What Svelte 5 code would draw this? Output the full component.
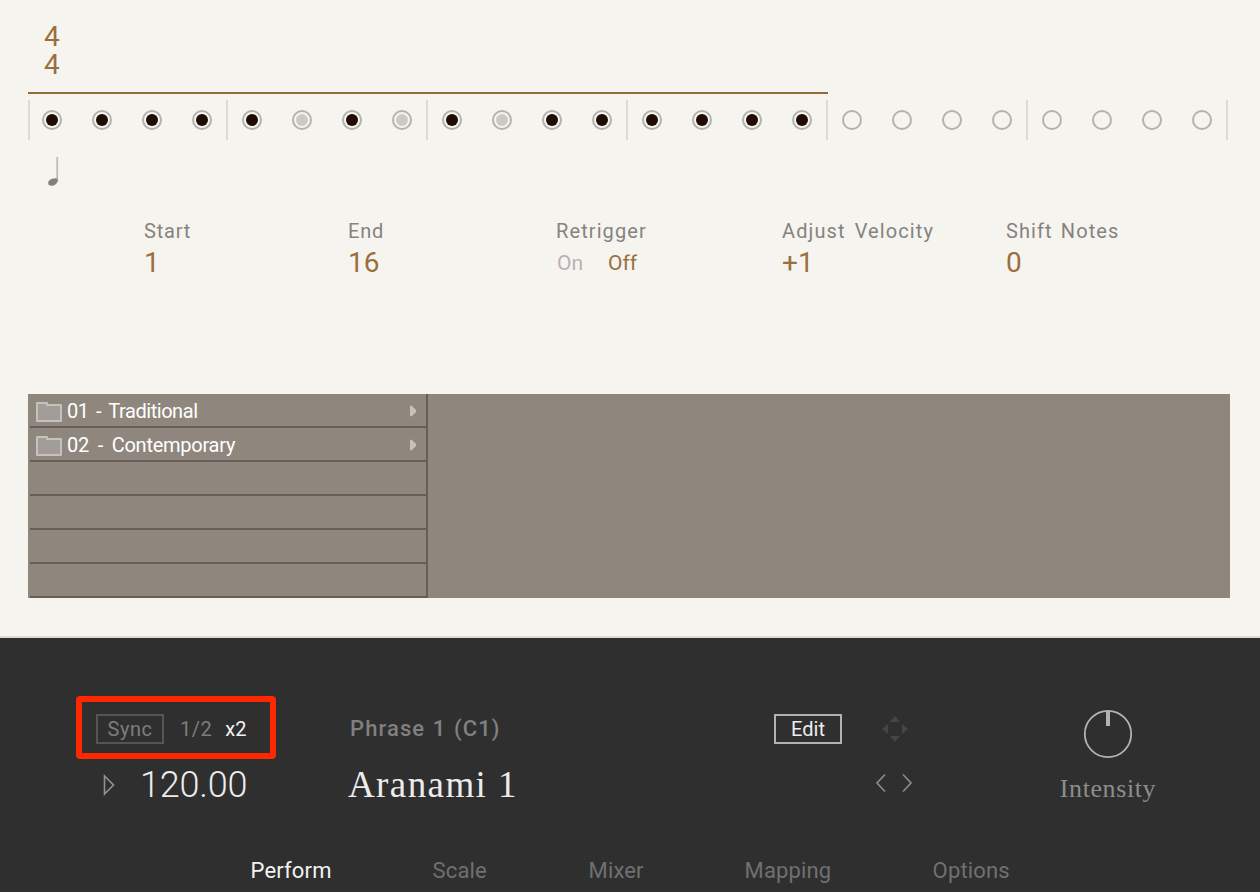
<script>
  const off = [5, 7, 9];
  const measures = Array.from({ length: 6 }, (_, m) =>
    Array.from({ length: 4 }, (_, s) => {
      const i = m * 4 + s;
      return i >= 16 ? 'empty' : off.includes(i) ? 'muted' : 'active';
    })
  );
  const params = [
    { label: 'Start', value: '1' },
    { label: 'End', value: '16' },
    { label: 'Retrigger' },
    { label: 'Adjust Velocity', value: '+1' },
    { label: 'Shift Notes', value: '0' }
  ];
  const folders = ['01 - Traditional', '02 - Contemporary', '', '', '', ''];
  const tabs = ['Perform', 'Scale', 'Mixer', 'Mapping', 'Options'];
</script>

<main>
  <section class="sequencer">
    <div class="signature"><span>4</span><span>4</span></div>
    <div class="range"></div>
    <div class="track">
      {#each measures as steps}
        <div class="measure">
          {#each steps as step}<i class="step {step}"></i>{/each}
        </div>
      {/each}
    </div>
    <svg class="note" width="12" height="32" viewBox="0 0 12 32">
      <path d="M9.2 1V26" stroke="#bdbcb8" stroke-width="1.8" fill="none" />
      <path d="M0.2 27Q0.2 24 4 22.8Q8 21.6 9.6 23V25.5Q9 28 5.5 29.4Q0.2 30.6 0.2 27Z" fill="#83817e" />
    </svg>
    <div class="params">
      {#each params as p}
        <div class="param">
          <span class="label">{p.label}</span>
          {#if p.value}
            <span class="value">{p.value}</span>
          {:else}
            <div class="toggle"><span>On</span><span class="on">Off</span></div>
          {/if}
        </div>
      {/each}
    </div>
    <div class="browser">
      <div class="list">
        {#each folders as f, i}
          <div class="row">
            {#if f}
              <svg width="26" height="20" viewBox="0 0 26 20">
                <path d="M1 19V1H11V3H25V19Z" fill="#a29d98" stroke="#c5c1bb" stroke-width="2" stroke-linejoin="round" />
              </svg>
              <span class="folder f{i}">{f}</span>
              <svg class="caret" width="6" height="12" viewBox="0 0 6 12"><path d="M0 0.5L2 1L6 5V7L2 11L0 11.5Z" fill="#c5c1bb" /></svg>
            {/if}
          </div>
        {/each}
      </div>
    </div>
  </section>

  <footer>
    <div class="controls">
      <div class="tempo">
        <div class="highlight">
          <span class="sync">Sync</span><span class="half">1/2</span><span class="double">x2</span>
        </div>
        <div class="bpm">
          <svg width="12" height="22" viewBox="0 0 12 22"><path d="M1.5 2V20L10.5 11Z" fill="none" stroke="#929292" stroke-width="1.6" /></svg>
          <span>120.00</span>
        </div>
      </div>
      <div class="phrase">
        <span class="slot">Phrase 1 (C1)</span>
        <span class="name">Aranami 1</span>
      </div>
      <div class="edit">Edit</div>
      <div class="nav">
        <svg class="pad" width="26" height="26" viewBox="0 0 26 26" fill="#454545"><path d="M13 0L18 6H8ZM13 26L18 20H8ZM0 13L6 8V18ZM26 13L20 8V18Z" /></svg>
        <svg width="38" height="20" viewBox="0 0 38 20" fill="none" stroke="#8a8a8a" stroke-width="1.7"><path d="M10 1.5L2 10L10 18.5M28 1.5L36 10L28 18.5" /></svg>
      </div>
      <div class="intensity">
        <svg width="50" height="50" viewBox="0 0 50 50"><circle cx="25" cy="25" r="23.2" fill="none" stroke="#b2b2b2" stroke-width="1.8" /><path d="M25 2V17" stroke="#b2b2b2" stroke-width="4" /></svg>
        <span>Intensity</span>
      </div>
    </div>
    <nav>
      {#each tabs as t, i}<span class="t{i}" class:current={i === 0}>{t}</span>{/each}
    </nav>
  </footer>
</main>

<style>
  :global(body) { background: #f6f4ef; }
  main {
    width: 1260px;
    height: 892px;
    overflow: hidden;
    display: flex;
    flex-direction: column;
    font-family: Roboto, "Liberation Sans", sans-serif;
    background: #f6f4ef;
    white-space: nowrap;
  }
  .sequencer {
    box-sizing: border-box;
    height: 636px;
    padding: 23px 0 0 28px;
    display: flex;
    flex-direction: column;
  }
  .signature {
    display: flex;
    flex-direction: column;
    padding-left: 16px;
    font-size: 28px;
    line-height: 28px;
    color: #9a6f3d;
  }
  .range { width: 800px; height: 2px; margin-top: 13px; background: #946b3d; }
  .track { display: flex; margin-top: 6px; }
  .measure {
    box-sizing: border-box;
    width: 200px;
    height: 40px;
    padding-right: 14px;
    border-right: 2px solid #dcdad6;
    display: flex;
    align-items: center;
    justify-content: flex-end;
    gap: 30px;
  }
  .measure:first-child { border-left: 2px solid #dcdad6; }
  .step {
    box-sizing: border-box;
    width: 20px;
    height: 20px;
    border: 2px solid #b4b2ae;
    border-radius: 50%;
    flex: none;
    display: grid;
    place-items: center;
  }
  .step::before { content: ""; width: 12px; height: 12px; border-radius: 50%; }
  .active::before { background: #1e0b04; }
  .muted::before { background: #cdc9c5; }
  .note { margin: 16px 0 0 20px; }
  .params {
    display: grid;
    grid-template-columns: 204px 208px 226px 224px auto;
    margin: 31px 0 0 116px;
    height: 60px;
  }
  .param { display: flex; flex-direction: column; }
  .label { font-size: 20px; line-height: 24px; letter-spacing: 1.1px; word-spacing: 3px; color: #85837f; }
  .param:first-child .label, .param:nth-child(2) .label { letter-spacing: .8px; }
  .param:last-child .label { word-spacing: 2px; }
  .value { font-size: 28px; line-height: 32px; margin-top: 4px; color: #9a6f3d; }
  .toggle { display: flex; gap: 25px; margin: 8px 0 0 1px; font-size: 21px; line-height: 24px; color: #b5b3af; }
  .toggle .on { color: #9a6f3d; }
  .browser { width: 1202px; height: 204px; margin-top: 115px; background: #8f877d; }
  .list { box-sizing: border-box; width: 400px; border-right: 2px solid #665f57; padding-left: 2px; }
  .row {
    box-sizing: border-box;
    height: 34px;
    padding: 4px 10px 0 6px;
    border-bottom: 2px solid #665f57;
    display: flex;
    align-items: center;
  }
  .folder { margin: -2px 0 0 5px; font-size: 20px; line-height: 24px; color: #fff; }
  .f0 { letter-spacing: -.45px; word-spacing: 3px; }
  .f1 { letter-spacing: -.25px; word-spacing: 4px; }
  .caret { margin: 0 0 2px auto; }
  footer {
    box-sizing: border-box;
    height: 256px;
    padding: 58px 0 0 76px;
    background: #2f2f2f;
    border-top: 2px solid #dcdad6;
    display: flex;
    flex-direction: column;
  }
  .controls { display: flex; height: 140px; }
  .tempo { display: flex; flex-direction: column; width: 274px; }
  .highlight {
    box-sizing: border-box;
    width: 200px;
    height: 63px;
    border: 6px solid #fd2800;
    border-radius: 4px;
    padding-left: 14px;
    display: flex;
    align-items: center;
    font-size: 20px;
    line-height: 26px;
    color: #7d7d7d;
  }
  .sync { box-sizing: border-box; width: 68px; height: 30px; border: 2px solid #555; text-align: center; letter-spacing: .5px; margin-top: 3px; }
  .half { margin: 3px 0 0 16px; letter-spacing: .5px; }
  .double { margin: 3px 0 0 13px; color: #f2f2f2; }
  .bpm { display: flex; align-items: center; margin: 3px 0 0 27px; font-size: 36px; line-height: 42px; font-weight: 300; letter-spacing: -.2px; color: #ececec; }
  .bpm span { margin: 2px 0 0 25px; }
  .bpm svg { margin-top: 1px; }
  .phrase { display: flex; flex-direction: column; width: 424px; }
  .slot { margin-top: 20px; font-size: 22px; font-weight: 500; line-height: 26px; letter-spacing: 1.1px; word-spacing: 1px; color: #808080; }
  .name { margin: 22px 0 0 -2px; font-family: "Liberation Serif", serif; font-size: 37px; line-height: 42px; letter-spacing: 1.4px; color: #ececec; }
  .edit {
    box-sizing: border-box;
    width: 68px;
    height: 30px;
    margin-top: 18px;
    border: 2px solid #b2b2b2;
    font-size: 20px;
    line-height: 26px;
    text-align: center;
    color: #ececec;
  }
  .nav { width: 38px; margin: 20px 0 0 33px; display: flex; flex-direction: column; align-items: center; gap: 31px; }
  .pad { margin-left: 2px; }
  .intensity { width: 120px; margin: 13px 0 0 135px; display: flex; flex-direction: column; align-items: center; }
  .intensity span { margin-top: 15px; font-family: "Liberation Serif", serif; font-size: 26px; line-height: 30px; letter-spacing: .6px; color: #8d8d8d; }
  nav { display: flex; margin: 21px 0 0 174px; padding-left: .6px; font-size: 22px; line-height: 28px; letter-spacing: .15px; color: #707070; }
  nav span { width: 182px; }
  nav .t1 { width: 156px; }
  nav .t2 { width: 156px; }
  nav .t3 { width: 188px; }
  nav .current { color: #f2f2f2; }
</style>
